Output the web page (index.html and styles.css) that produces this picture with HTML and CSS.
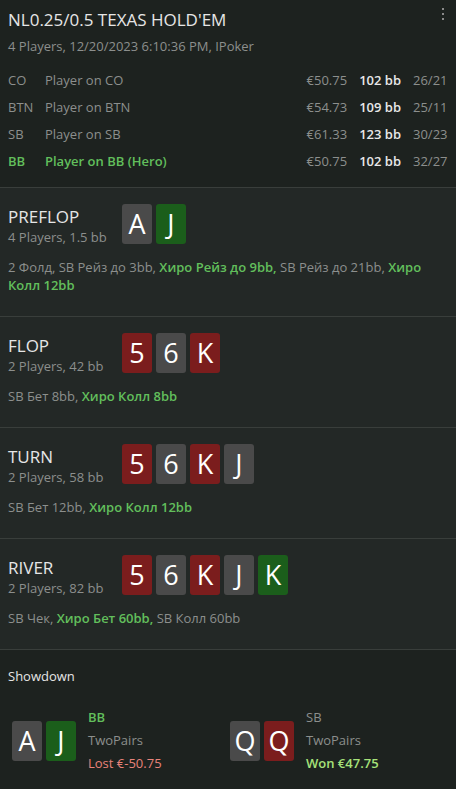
FILE: index.html
```html
<!DOCTYPE html>
<html>
<head lang="en">
    <meta charset="UTF-8">
    <title>Hand</title>
    <link rel="stylesheet" href="styles.css">
</head>
<body>
<div id="hand">
    <div class="head">
        <div class="title">NL0.25/0.5 TEXAS HOLD'EM</div>
        <span class="menu"><i></i><i></i><i></i></span>
        <div class="info">4 Players, 12/20/2023 6:10:36 PM, IPoker</div>
        <ul class="players">
            <li><span class="pos">CO</span><span class="name">Player on CO</span><span class="stack">€50.75</span><b>102 bb</b><span class="ratio">26/21</span></li>
            <li><span class="pos">BTN</span><span class="name">Player on BTN</span><span class="stack">€54.73</span><b>109 bb</b><span class="ratio">25/11</span></li>
            <li><span class="pos">SB</span><span class="name">Player on SB</span><span class="stack">€61.33</span><b>123 bb</b><span class="ratio">30/23</span></li>
            <li class="hero"><span class="pos">BB</span><span class="name">Player on BB (Hero)</span><span class="stack">€50.75</span><b>102 bb</b><span class="ratio">32/27</span></li>
        </ul>
    </div>

    <div class="street">
        <div class="top">
            <div class="label">
                <div class="sname">PREFLOP</div>
                <div class="sinfo">4 Players, 1.5 bb</div>
            </div>
            <div class="cards"><span class="card">A</span><span class="card green">J</span></div>
        </div>
        <p class="acts">2 Фолд, SB Рейз до 3bb, <b>Хиро Рейз до 9bb,</b> SB Рейз до 21bb, <b>Хиро</b> <b>Колл 12bb</b></p>
    </div>

    <div class="street">
        <div class="top">
            <div class="label">
                <div class="sname">FLOP</div>
                <div class="sinfo">2 Players, 42 bb</div>
            </div>
            <div class="cards"><span class="card red">5</span><span class="card">6</span><span class="card red">K</span></div>
        </div>
        <p class="acts">SB Бет 8bb, <b>Хиро Колл 8bb</b></p>
    </div>

    <div class="street">
        <div class="top">
            <div class="label">
                <div class="sname">TURN</div>
                <div class="sinfo">2 Players, 58 bb</div>
            </div>
            <div class="cards"><span class="card red">5</span><span class="card">6</span><span class="card red">K</span><span class="card">J</span></div>
        </div>
        <p class="acts">SB Бет 12bb, <b>Хиро Колл 12bb</b></p>
    </div>

    <div class="street">
        <div class="top">
            <div class="label">
                <div class="sname">RIVER</div>
                <div class="sinfo">2 Players, 82 bb</div>
            </div>
            <div class="cards"><span class="card red">5</span><span class="card">6</span><span class="card red">K</span><span class="card">J</span><span class="card green">K</span></div>
        </div>
        <p class="acts">SB Чек, <b>Хиро Бет 60bb,</b> SB Колл 60bb</p>
    </div>

    <div class="showdown">
        <div class="sd-title">Showdown</div>
        <div class="sd-row">
            <div class="sd-player">
                <div class="cards"><span class="card">A</span><span class="card green">J</span></div>
                <div class="sd-info">
                    <div class="who hero-c">BB</div>
                    <div class="combo">TwoPairs</div>
                    <div class="lost">Lost €-50.75</div>
                </div>
            </div>
            <div class="sd-player">
                <div class="cards"><span class="card">Q</span><span class="card red">Q</span></div>
                <div class="sd-info">
                    <div class="who">SB</div>
                    <div class="combo">TwoPairs</div>
                    <div class="won">Won €47.75</div>
                </div>
            </div>
        </div>
    </div>
</div>
</body>
</html>
```

FILE: styles.css
```css
*{
    margin: 0;
    padding: 0;
    box-sizing: border-box;
}
ul,ol{
    list-style: none;
}
body{
    background: #1d221f;
    font-family: "Segoe UI", "Open Sans", "Noto Sans", sans-serif;
    color: #8c8f8d;
    font-size: 13px;
}
.head{
    position: relative;
    background: #1d221f;
    padding: 6px 8px 13px;
    border-bottom: 1px solid #393e3b;
}
.title{
    font-size: 17px;
    color: #e6e6e6;
    line-height: 28px;
}
.menu{
    position: absolute;
    top: 8px;
    right: 12px;
    display: flex;
    flex-direction: column;
    gap: 3px;
}
.menu i{
    width: 2px;
    height: 2px;
    background: #8a8a8a;
}
.info{
    line-height: 24px;
    margin-bottom: 8px;
}
.players li{
    display: flex;
    height: 27px;
    align-items: center;
    gap: 12px;
}
.players .pos{
    width: 25px;
}
.players .name{
    flex: 1;
}
.players b{
    color: #e8e8e8;
    font-weight: 600;
}
.players .ratio{
    width: 34px;
    margin-right: 1px;
}
.players .hero .pos,.players .hero .name{
    color: #62bf5c;
    font-weight: 600;
}
.street{
    background: #232826;
    padding: 16px 8px 22px;
    border-bottom: 1px solid #393e3b;
}
.top{
    display: flex;
}
.label{
    width: 114px;
    padding-top: 1px;
}
.sname{
    font-size: 17px;
    color: #e6e6e6;
    line-height: 24px;
}
.sinfo{
    line-height: 16px;
}
.cards{
    display: flex;
    gap: 4px;
}
.card{
    width: 30px;
    height: 40px;
    border-radius: 3px;
    background: #4a4a4a;
    color: #fff;
    font-size: 27px;
    text-align: center;
    line-height: 40px;
}
.card.red{
    background: #7b1d1d;
}
.card.green{
    background: #1b5e1b;
}
.acts{
    margin-top: 13px;
    line-height: 18px;
}
.acts b{
    color: #62bf5c;
    font-weight: 600;
}
.showdown{
    background: #1d221f;
    padding: 16px 8px 20px;
}
.sd-title{
    color: #e6e6e6;
    line-height: 20px;
}
.sd-row{
    display: flex;
    margin-top: 20px;
    padding-left: 4px;
}
.sd-player{
    display: flex;
    align-items: center;
    gap: 12px;
    width: 227px;
}
.sd-info div{
    line-height: 23px;
}
.hero-c{
    color: #62bf5c;
    font-weight: 600;
}
.lost{
    color: #e8837a;
}
.won{
    color: #a7e27a;
    font-weight: 600;
}
```
